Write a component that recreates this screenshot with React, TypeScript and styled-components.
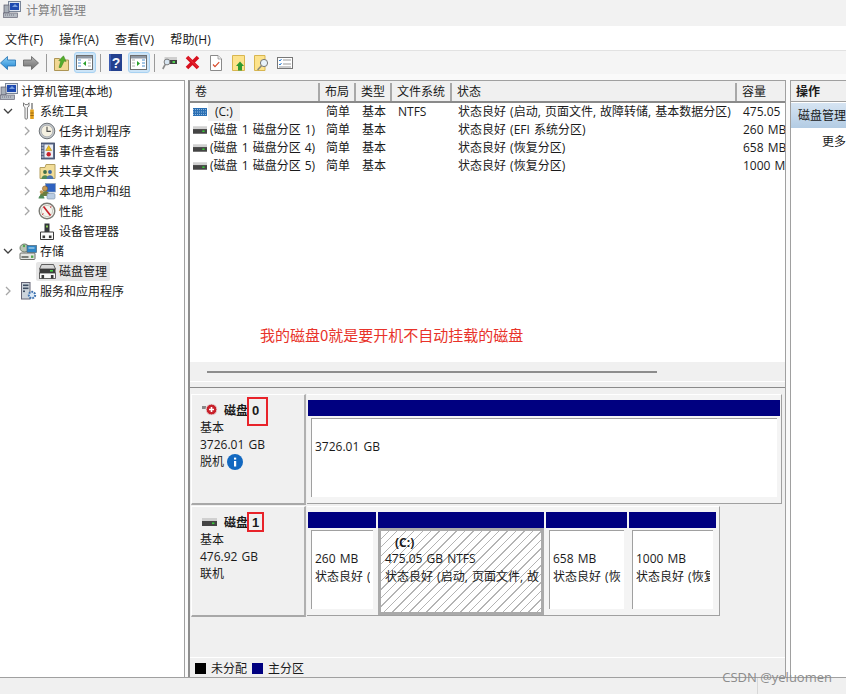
import React from "react";
import styled, { createGlobalStyle } from "styled-components";

const Global = createGlobalStyle`
  html, body { margin: 0; padding: 0; height: 100%; background: #fff; }
  body { font-family: "Open Sans", "Noto Sans CJK SC", sans-serif; font-size: 12px; color: #1a1a1a; overflow: hidden; word-spacing: 1px; }
  #root { width: 846px; height: 694px; }
`;

const Win = styled.div`
  position: relative; width: 846px; height: 694px; display: flex; flex-direction: column; overflow: hidden; background: #fff;
`;
const TitleBar = styled.div`
  height: 26px; background: #f2f2f2; display: flex; align-items: center; gap: 5px; padding: 0 0 7px 3px; box-sizing: border-box; color: #808080; font-size: 12px;
`;
const MenuBar = styled.div`
  height: 25px; box-sizing: border-box; background: #fff; display: flex; align-items: center; gap: 16px; padding-left: 5px; border-bottom: 1px solid #e2e2e2; padding-top: 1px; letter-spacing: 0.2px;
`;
const Toolbar = styled.div`
  height: 23px; background: #f5f5f5; display: flex; align-items: center; margin-left: -4px;
`;
const ToolSlot = styled.div`
  width: 23px; height: 23px; display: flex; align-items: center; justify-content: center;
`;
const ToolToggle = styled.div`
  width: 22px; height: 21px; display: flex; align-items: center; justify-content: center; box-sizing: border-box; background: #cce4f7; border: 1px solid #a8d2f2; border-radius: 3px;
`;
const ToolSep = styled.div`
  width: 8px; height: 18px; display: flex; justify-content: center;
  &::before { content: ""; width: 1px; background: #9a9a9a; }
`;
const Body = styled.div`
  flex: 1; display: flex; background: #fafafa; padding-top: 6px; min-height: 0;
`;
const TreePane = styled.div`
  width: 185px; box-sizing: border-box; background: #fff; border-top: 1px solid #a0a0a0; border-right: 1px solid #a0a0a0; margin-right: 3px;
`;
const TreeRow = styled.div<{ $depth: number }>`
  height: 20px; display: flex; align-items: center; padding-left: ${p => p.$depth}px;
`;
const Arrow = styled.span`
  width: 14px; height: 14px; margin-right: 4px; display: flex; align-items: center; justify-content: center; flex: none;
`;
const TreeLabel = styled.span<{ $selected?: boolean }>`
  display: flex; align-items: center; height: 19px; border-radius: 2px;
  margin-left: ${p => (p.$selected ? "-2px" : "0")};
  padding: ${p => (p.$selected ? "0 3px 0 2px" : "0")};
  background: ${p => (p.$selected ? "#e6e6e6" : "transparent")};
`;
const TreeIcon = styled.span`
  width: 18px; height: 18px; flex: none; display: flex; align-items: center; justify-content: center; margin-right: 3px;
`;
const MainPane = styled.div`
  width: 598px; box-sizing: border-box; border-left: 2px solid #8e8e8e; border-top: 1px solid #a0a0a0; border-right: 1px solid #a0a0a0; display: flex; flex-direction: column; background: #fff; margin-right: 4px;
`;
const ListArea = styled.div`
  height: 281px; background: #fff; overflow: hidden;
`;
const HeadRow = styled.div`
  height: 22px; display: flex; box-sizing: border-box; background: #f0f0f0; border-bottom: 2px solid #8a8a8a; padding-top: 2px;
`;
const HeadCell = styled.div<{ $w: number }>`
  width: ${p => p.$w}px; flex: none; box-sizing: border-box; padding-left: 5px; border-right: 2px solid #a8a8a8; line-height: 18px; overflow: hidden; white-space: nowrap;
  &:last-child { border-right: none; }
`;
const DataRow = styled.div`
  height: 18px; display: flex; align-items: center; white-space: nowrap;
`;
const DataCell = styled.div<{ $w: number }>`
  width: ${p => p.$w}px; flex: none; box-sizing: border-box; padding-left: 6px; overflow: hidden; display: flex; align-items: center; line-height: 18px;
`;
const VolCell = styled(DataCell)`
  padding-left: 3px; gap: 3px;
`;
const VolC = styled.span`
  background: #f0f0f0; padding: 0 7px; margin-left: -2px;
`;
const HScroll = styled.div`
  height: 20px; box-sizing: border-box; background: #f0f0f0; border-bottom: 1px solid #fff; display: flex; align-items: center; padding-left: 17px;
  &::before { content: ""; width: 450px; height: 2px; background: #8c8c8c; }
`;
const Splitter = styled.div`
  height: 5px; background: #f0f0f0; border-bottom: 1px solid #8a8a8a;
`;
const Graph = styled.div`
  flex: 1; background: #f0f0f0; display: flex; flex-direction: column; padding-top: 6px; min-height: 0;
`;
const DiskRow = styled.div`
  display: flex; height: 111px; margin-bottom: 1px;
`;
const DiskLabel = styled.div`
  width: 115px; box-sizing: border-box; margin-left: 1px; flex: none; background: #f0f0f0; border: 1px solid #fff; border-right: 2px solid #b0b0b0; border-bottom: 2px solid #a8a8a8; padding: 6px 0 0 8px; line-height: 17px;
`;
const DiskName = styled.div`
  display: flex; align-items: center; height: 18px; font-weight: 700;
`;
const DiskIconSlot = styled.span`
  width: 24px; flex: none; padding-left: 2px; box-sizing: border-box; display: flex; align-items: center;
`;
const DiskNumber = styled.span`
  font-family: "Liberation Sans", sans-serif; margin-left: 4px; font-size: 13px; position: relative;
`;
const RedBox = styled.span<{ $h: number; $w: number; $top: number }>`
  position: absolute; left: -5px; top: ${p => p.$top}px; width: ${p => p.$w}px; height: ${p => p.$h}px; border: 2px solid #e8232a; box-sizing: border-box;
`;
const Offline = styled.div`
  display: flex; align-items: center; gap: 3px;
`;
const Partitions = styled.div<{ $right: number }>`
  display: flex; box-sizing: border-box; margin-left: 1px; padding: 5px ${p => p.$right}px 0 1px; border-right: 1px solid #a0a0a0; border-bottom: 1px solid #a0a0a0; border-top: 1px solid #fff; background: #f4f4f4; height: 110px; gap: 2px;
`;
const Part = styled.div<{ $w: number }>`
  width: ${p => p.$w}px; flex: none; display: flex; flex-direction: column;
`;
const PartHead = styled.div`
  height: 16px; background: #000080; flex: none;
`;
const PartBody = styled.div`
  margin: 2px 3px 6px 3px; flex: 1; box-sizing: border-box; line-height: 18px; padding: 19px 3px 0 3px; background: #fff; min-width: 0;
  border-left: 1px solid #a0a0a0; border-top: 1px solid #a0a0a0;
`;
const SelectedPartBody = styled.div`
  flex: 1; box-sizing: border-box; line-height: 18px; padding: 4px 2px 0 4px; min-width: 0;
  background: repeating-linear-gradient(135deg, #fff 0 5px, #b4b4b4 5px 6px);
  border: 3px solid #aaa;
`;
const PartLines = styled.div`
  overflow: hidden; white-space: nowrap;
`;
const PartBold = styled.div`
  font-weight: 700; padding-left: 10px; line-height: 15px;
`;
const Legend = styled.div`
  margin-top: auto; height: 20px; box-sizing: border-box; border-top: 1px solid #fff; display: flex; align-items: center; padding: 1px 0 0 5px; background: #f0f0f0;
`;
const Swatch = styled.span<{ $c: string }>`
  width: 11px; height: 11px; background: ${p => p.$c}; margin-right: 5px; flex: none;
`;
const LegendText = styled.span`
  margin-right: 5px;
`;
const ActionPane = styled.div`
  flex: 1; background: #fff; border-left: 1px solid #a0a0a0; border-top: 1px solid #a0a0a0; overflow: hidden; white-space: nowrap;
`;
const ActionHead = styled.div`
  height: 21px; background: #f0f0f0; font-weight: 700; line-height: 21px; padding-left: 5px; border-bottom: 1px solid #a0a0a0; box-sizing: border-box;
`;
const ActionSel = styled.div`
  height: 25px; background: linear-gradient(#d6e4f2, #b3cce4); line-height: 25px; padding-left: 7px; margin-top: 1px;
`;
const ActionItem = styled.div`
  padding-left: 31px; line-height: 28px;
`;
const StatusBar = styled.div`
  height: 16px; background: #f0f0f0; border-top: 1px solid #a0a0a0; display: flex; justify-content: flex-end; flex: none;
  &::after { content: ""; width: 88px; border-left: 1px solid #d8d8d8; }
`;
const Note = styled.div`
  position: absolute; left: 260px; top: 325px; color: #e8332a; font-size: 15px; line-height: 20px; word-spacing: 0; font-family: "Noto Sans CJK SC", sans-serif;
`;
const Watermark = styled.div`
  position: absolute; right: 14px; top: 668px; color: #8c8c8c; font-size: 13px; line-height: 18px; word-spacing: 0; font-family: "Open Sans", sans-serif;
`;

const Chev = ({ open }: { open?: boolean }) => (
  <svg width="10" height="10" viewBox="0 0 10 10" fill="none" stroke={open ? "#404040" : "#a6a6a6"} strokeWidth="1.3">
    {open ? <path d="M1 3l4 4 4-4" /> : <path d="M3 1l4 4-4 4" />}
  </svg>
);
const Computer = () => (
  <svg width="18" height="17" viewBox="0 0 18 17">
    <rect x="5.5" y="0.5" width="12" height="10" fill="#dfe5ee" stroke="#7a8698" />
    <rect x="7" y="2" width="9" height="7" fill="#1d49b0" />
    <path d="M9 6l3-3 3 3" fill="#7aa0e0" />
    <rect x="1" y="4" width="5" height="8" fill="#a8afb8" stroke="#556" strokeWidth=".7" />
    <rect x="0.5" y="12" width="14" height="4.5" fill="#b4bac2" stroke="#667" strokeWidth=".7" />
    <path d="M2 14h10" stroke="#667" strokeWidth=".8" strokeDasharray="1 1" />
  </svg>
);
const Tools = () => (
  <svg width="13" height="18" viewBox="0 0 13 18">
    <path d="M1.5 .8v3.4L3 5.5V16a1.2 1.2 0 0 0 2.4 0V5.5L7 4.2V.8L5.6 2.6H3z" fill="#fafafa" stroke="#6c6c6c" strokeWidth=".9" />
    <path d="M10 1v6.5" stroke="#8a8a8a" strokeWidth="1.6" />
    <path d="M10 7.5v9.5" stroke="#e3a01a" strokeWidth="3.6" />
    <path d="M8.3 11h3.4M8.3 13.5h3.4" stroke="#8c5c10" strokeWidth=".8" />
  </svg>
);
const Clock = () => (
  <svg width="18" height="18" viewBox="0 0 18 18">
    <circle cx="9" cy="9" r="7.8" fill="#c4c8cc" stroke="#6f7478" />
    <circle cx="9" cy="9" r="5.8" fill="#f5f1e2" stroke="#9a9ea2" strokeWidth=".6" />
    <path d="M9 4.8V9.4H12.8" fill="none" stroke="#4c4c4c" strokeWidth="1.1" />
  </svg>
);
const EventLog = () => (
  <svg width="15" height="18" viewBox="0 0 15 18">
    <rect x="1.5" y="1" width="13" height="16" fill="#5d6c8c" stroke="#3a4560" strokeWidth=".8" />
    <path d="M1.5 3h2M1.5 6h2M1.5 9h2M1.5 12h2M1.5 15h2" stroke="#e0e4ec" />
    <rect x="4.5" y="2.5" width="8.5" height="13" fill="#eceef4" />
    <path d="M8.7 3.5l3 5h-6z" fill="#f0c020" stroke="#a07c10" strokeWidth=".5" />
    <circle cx="8.7" cy="12.3" r="2.2" fill="#c8202a" />
  </svg>
);
const SharedFolder = () => (
  <svg width="17" height="17" viewBox="0 0 17 17">
    <path d="M1 4.5h5l1-3h9v14H1z" fill="#f2dd98" stroke="#b4a060" />
    <circle cx="6" cy="9" r="1.9" fill="#3f6f48" />
    <circle cx="11" cy="9" r="1.9" fill="#39669e" />
    <path d="M2.5 16c0-5 7-5 7 0z" fill="#4f8a58" />
    <path d="M7.5 16c0-5 7-5 7 0z" fill="#4a74ae" />
  </svg>
);
const Users = () => (
  <svg width="18" height="17" viewBox="0 0 18 17">
    <rect x="7.5" y="0.5" width="10" height="8.5" fill="#2f62c0" stroke="#8aa0b8" strokeWidth=".7" />
    <circle cx="7" cy="5.5" r="2.6" fill="#c89a55" stroke="#6a4a20" strokeWidth=".5" />
    <path d="M2 13c0-6.5 10-6.5 10 0z" fill="#6b7d3e" />
    <circle cx="3.5" cy="9" r="1.8" fill="#c89a55" />
    <path d="M.5 15.5c0-4.5 6-4.5 6 0z" fill="#4f8a58" />
    <rect x="9" y="10.5" width="8" height="5.5" rx="1.2" fill="#b9cce2" stroke="#7a90a8" strokeWidth=".6" />
  </svg>
);
const Gauge = () => (
  <svg width="18" height="18" viewBox="0 0 18 18">
    <circle cx="9" cy="9" r="7.8" fill="#f6f5ef" stroke="#7a7a74" strokeWidth="1.4" />
    <circle cx="9" cy="9" r="5.6" fill="none" stroke="#b8b8ae" strokeWidth=".7" />
    <path d="M5.5 4.5L12.5 13.5" stroke="#c8202a" strokeWidth="1.7" />
    <path d="M12 5.5L13.4 4.4M4 12.5l1.5-.8" stroke="#c8202a" strokeWidth="1" />
  </svg>
);
const DeviceMgr = () => (
  <svg width="14" height="17" viewBox="0 0 14 17">
    <rect x="4.5" y="0.5" width="5" height="8.5" fill="#33373a" />
    <rect x="6" y="2.5" width="2" height="2" fill="#8ecb5a" />
    <path d="M.5 9h13v7.5H.5z" fill="#fafafa" stroke="#3a3a3a" />
    <rect x="2.5" y="12.5" width="2.6" height="2.6" fill="#3a3a3a" />
    <rect x="8.9" y="12.5" width="2.6" height="2.6" fill="#3a3a3a" />
  </svg>
);
const Storage = () => (
  <svg width="18" height="17" viewBox="0 0 18 17">
    <ellipse cx="5.5" cy="5" rx="4.5" ry="4" fill="#b9c4b4" stroke="#6f7a6a" />
    <circle cx="5" cy="3" r="1.2" fill="#4ea84e" />
    <rect x="8" y="2.5" width="9.5" height="7" fill="#2c86c8" stroke="#4a6478" strokeWidth=".7" />
    <path d="M9.5 5h6" stroke="#cfe6f6" strokeWidth="1" />
    <rect x="1" y="10" width="15" height="6.5" rx="1" fill="#e4e6e2" stroke="#6a6e68" />
    <rect x="2.5" y="13" width="7" height="2" fill="#7a7e78" />
    <rect x="12" y="12.5" width="2.4" height="2.4" fill="#54a84e" />
  </svg>
);
const Disk = ({ w = 15 }: { w?: number }) => (
  <svg width={w} height={Math.round(w * 0.55)} viewBox="0 0 15 8">
    <rect x="0" y="0" width="15" height="3" fill="#d0d0d0" />
    <rect x="0" y="3" width="15" height="5" fill="#444" />
    <rect x="10" y="4.5" width="2.4" height="1.6" fill="#35d035" />
  </svg>
);
const DiskBig = () => (
  <svg width="17" height="15" viewBox="0 0 17 15">
    <path d="M2.5 .5h12L16.5 5H.5z" fill="#d8d8d8" stroke="#3c3c3c" strokeWidth=".8" />
    <rect x="0.5" y="5" width="16" height="4" fill="#3a3a3a" />
    <rect x="11" y="6" width="3" height="1.6" fill="#43d043" />
    <rect x="0.5" y="9" width="16" height="5.5" fill="#f8f8f8" stroke="#3c3c3c" strokeWidth=".8" />
    <rect x="2.5" y="11" width="2.6" height="3.5" fill="#3a3a3a" />
    <rect x="11.9" y="11" width="2.6" height="3.5" fill="#3a3a3a" />
  </svg>
);
const VolumeStriped = () => (
  <svg width="14" height="8" viewBox="0 0 14 8">
    <rect width="14" height="8" fill="#2a6fb4" />
    <path d="M0 1.5h14M0 4h14M0 6.5h14" stroke="#c4def4" strokeWidth=".7" strokeDasharray="1 1" />
  </svg>
);
const Services = () => (
  <svg width="17" height="18" viewBox="0 0 17 18">
    <rect x="1.5" y="0.5" width="8.5" height="16.5" fill="#ccd4dc" stroke="#667" />
    <rect x="3" y="2.5" width="5.5" height="1.6" fill="#3d4d62" />
    <rect x="3" y="5.5" width="5.5" height="1.6" fill="#3d4d62" />
    <rect x="3" y="8.5" width="2" height="1.6" fill="#3d4d62" />
    <circle cx="12" cy="13" r="3.2" fill="#dbe9f6" stroke="#3f72b0" strokeWidth="2" strokeDasharray="1.8 1" />
  </svg>
);
const BackArrow = () => (
  <svg width="16" height="16" viewBox="0 0 16 16">
    <defs>
      <linearGradient id="backFill" x1="0" y1="0" x2="0" y2="1">
        <stop offset="0" stopColor="#8ed2f8" />
        <stop offset="1" stopColor="#1f83d0" />
      </linearGradient>
    </defs>
    <path d="M0.5 8L7.5 1.5V5H15.5V11H7.5V14.5Z" fill="url(#backFill)" stroke="#2270b0" strokeWidth=".8" />
  </svg>
);
const FwdArrow = () => (
  <svg width="16" height="16" viewBox="0 0 16 16">
    <defs>
      <linearGradient id="fwdFill" x1="0" y1="0" x2="0" y2="1">
        <stop offset="0" stopColor="#b4b4b4" />
        <stop offset="1" stopColor="#6e6e6e" />
      </linearGradient>
    </defs>
    <path d="M15.5 8L8.5 1.5V5H0.5V11H8.5V14.5Z" fill="url(#fwdFill)" stroke="#626262" strokeWidth=".8" />
  </svg>
);
const UpFolder = () => (
  <svg width="15" height="16" viewBox="0 0 15 16">
    <path d="M.5 3.5h5l1 1.5h8v10.5H.5z" fill="#f2d893" stroke="#ad9554" />
    <path d="M5 12.5L6.8 6 4.8 5.6 9.5.8l2.6 5.6-2-.3L7 12.5z" fill="#55ad2c" stroke="#38801c" strokeWidth=".5" />
  </svg>
);
const PanelIcon = ({ right }: { right?: boolean }) => (
  <svg width="17" height="15" viewBox="0 0 17 15">
    <rect x=".5" y=".5" width="16" height="14" fill="#fff" stroke="#6e6e6e" />
    <rect x="1" y="1" width="15" height="2.5" fill="#8e98a4" />
    {right
      ? <path d="M7 6l3 2.5-3 2.5z" fill="#2ca02c" />
      : <path d="M10 6l-3 2.5 3 2.5z" fill="#2ca02c" />}
    <path d={right ? "M12 5h3M12 8h3M12 11h3" : "M2 5h3M2 8h3M2 11h3"} stroke="#4a8fd0" />
    <path d={right ? "M2 5h3M2 8h3M2 11h3" : "M12 5h3M12 8h3M12 11h3"} stroke="#b0b0b0" />
  </svg>
);
const Help = () => (
  <svg width="13" height="17" viewBox="0 0 13 17">
    <rect width="13" height="17" fill="#23408e" />
    <rect x="0" y="0" width="2" height="17" fill="#3a5ab0" />
    <text x="7" y="14" textAnchor="middle" fontSize="14" fontWeight="700" fill="#f2f5fc" fontFamily="Liberation Sans">?</text>
  </svg>
);
const Connect = () => (
  <svg width="15" height="15" viewBox="0 0 15 15">
    <rect x="2.5" y="2" width="12.5" height="3" fill="#cfcfcf" />
    <rect x="2.5" y="5" width="12.5" height="4" fill="#3f3f3f" />
    <rect x="10.5" y="6" width="2.5" height="2" fill="#4fd04f" />
    <path d="M3.2 9.5L.8 14" stroke="#8a8a8a" strokeWidth="1.6" />
    <circle cx="5" cy="7" r="2.9" fill="#d8e6f2" stroke="#808080" />
  </svg>
);
const RedX = () => (
  <svg width="15" height="15" viewBox="0 0 15 15">
    <path d="M2 2l11 11M13 2L2 13" stroke="#d8101e" strokeWidth="3.6" />
    <path d="M3 2.5l9.5 9.5" stroke="#ec3a40" strokeWidth=".9" />
  </svg>
);
const CheckDoc = () => (
  <svg width="12" height="16" viewBox="0 0 12 16">
    <path d="M.5.5h7.5l3.5 3.5v11.5H.5z" fill="#fff" stroke="#8a8a8a" />
    <path d="M8 .5V4h3.5" fill="#eee" stroke="#8a8a8a" strokeWidth=".7" />
    <path d="M3 9.5l2 2.2L9.2 7.2" fill="none" stroke="#d84a2a" strokeWidth="1.2" />
  </svg>
);
const FolderUp = () => (
  <svg width="13" height="16" viewBox="0 0 13 16">
    <path d="M.5.5h12v15H.5z" fill="#fde38c" stroke="#d8b650" />
    <path d="M8 6.5l4 4.5H10v4.5H6V11H4z" fill="#2f9a2f" />
  </svg>
);
const FolderSearch = () => (
  <svg width="15" height="16" viewBox="0 0 15 16">
    <path d="M.5.5h10.5v15H.5z" fill="#fde38c" stroke="#d8b650" />
    <circle cx="10" cy="8" r="3.6" fill="#e8f2fa" stroke="#777" />
    <path d="M7.4 10.8L3.6 15" stroke="#8a8a7a" strokeWidth="1.6" />
  </svg>
);
const ListIcon = () => (
  <svg width="16" height="12" viewBox="0 0 16 12">
    <rect x=".5" y=".5" width="15" height="11" fill="#fff" stroke="#777" />
    <path d="M2 3l1 1 1.5-2M2 7l1 1 1.5-2" fill="none" stroke="#2f7fd0" />
    <path d="M6 3h8M6 7h8M2 10h12" stroke="#999" />
  </svg>
);
const OfflineBadge = () => (
  <svg width="18" height="14" viewBox="0 0 18 14">
    <rect x="0" y="3" width="4" height="3" fill="#888" />
    <circle cx="9.5" cy="6.5" r="5.5" fill="#c8202a" stroke="#e8e8e8" />
    <path d="M9.5 4v5M7 6.5h5" stroke="#fff" strokeWidth="1.6" />
  </svg>
);
const InfoIcon = () => (
  <svg width="16" height="16" viewBox="0 0 16 16">
    <circle cx="8" cy="8" r="8" fill="#1268c0" />
    <rect x="7" y="7" width="2.2" height="5.5" fill="#fff" />
    <rect x="7" y="3.6" width="2.2" height="2" fill="#fff" />
  </svg>
);

const treeRows: { d: number; arrow?: "open" | "closed"; icon: React.ReactNode; text: string; sel?: boolean }[] = [
  { d: 0, icon: <Computer />, text: "计算机管理(本地)" },
  { d: 1, arrow: "open", icon: <Tools />, text: "系统工具" },
  { d: 20, arrow: "closed", icon: <Clock />, text: "任务计划程序" },
  { d: 20, arrow: "closed", icon: <EventLog />, text: "事件查看器" },
  { d: 20, arrow: "closed", icon: <SharedFolder />, text: "共享文件夹" },
  { d: 20, arrow: "closed", icon: <Users />, text: "本地用户和组" },
  { d: 20, arrow: "closed", icon: <Gauge />, text: "性能" },
  { d: 38, icon: <DeviceMgr />, text: "设备管理器" },
  { d: 1, arrow: "open", icon: <Storage />, text: "存储" },
  { d: 38, icon: <DiskBig />, text: "磁盘管理", sel: true },
  { d: 1, arrow: "closed", icon: <Services />, text: "服务和应用程序" },
];

const cols = [130, 36, 36, 60, 285, 49];
const heads = ["卷", "布局", "类型", "文件系统", "状态", "容量"];
const vols = [
  { name: "(C:)", fs: "NTFS", state: "状态良好 (启动, 页面文件, 故障转储, 基本数据分区)", size: "475.05" },
  { name: "(磁盘 1 磁盘分区 1)", fs: "", state: "状态良好 (EFI 系统分区)", size: "260 MB" },
  { name: "(磁盘 1 磁盘分区 4)", fs: "", state: "状态良好 (恢复分区)", size: "658 MB" },
  { name: "(磁盘 1 磁盘分区 5)", fs: "", state: "状态良好 (恢复分区)", size: "1000 MB" },
];

export default function App() {
  return (
    <Win>
      <Global />
      <TitleBar><Computer /><span>计算机管理</span></TitleBar>
      <MenuBar>
        <span>文件(F)</span><span>操作(A)</span><span>查看(V)</span><span>帮助(H)</span>
      </MenuBar>
      <Toolbar>
        <ToolSlot><BackArrow /></ToolSlot>
        <ToolSlot><FwdArrow /></ToolSlot>
        <ToolSep />
        <ToolSlot><UpFolder /></ToolSlot>
        <ToolSlot><ToolToggle><PanelIcon /></ToolToggle></ToolSlot>
        <ToolSep />
        <ToolSlot><Help /></ToolSlot>
        <ToolSlot><ToolToggle><PanelIcon right /></ToolToggle></ToolSlot>
        <ToolSep />
        <ToolSlot><Connect /></ToolSlot>
        <ToolSlot><RedX /></ToolSlot>
        <ToolSlot><CheckDoc /></ToolSlot>
        <ToolSlot><FolderUp /></ToolSlot>
        <ToolSlot><FolderSearch /></ToolSlot>
        <ToolSlot><ListIcon /></ToolSlot>
      </Toolbar>
      <Body>
        <TreePane>
          {treeRows.map(r => (
            <TreeRow key={r.text} $depth={r.d}>
              {r.arrow && <Arrow><Chev open={r.arrow === "open"} /></Arrow>}
              <TreeLabel $selected={r.sel}>
                <TreeIcon>{r.icon}</TreeIcon>
                <span>{r.text}</span>
              </TreeLabel>
            </TreeRow>
          ))}
        </TreePane>
        <MainPane>
          <ListArea>
            <HeadRow>
              {heads.map((h, i) => <HeadCell key={h} $w={cols[i]}>{h}</HeadCell>)}
            </HeadRow>
            {vols.map((v, idx) => (
              <DataRow key={v.name}>
                <VolCell $w={cols[0]}>
                  {idx === 0 ? <VolumeStriped /> : <Disk w={14} />}
                  {idx === 0 ? <VolC>{v.name}</VolC> : <span>{v.name}</span>}
                </VolCell>
                <DataCell $w={cols[1]}>简单</DataCell>
                <DataCell $w={cols[2]}>基本</DataCell>
                <DataCell $w={cols[3]}>{v.fs}</DataCell>
                <DataCell $w={cols[4]}>{v.state}</DataCell>
                <DataCell $w={cols[5]}>{v.size}</DataCell>
              </DataRow>
            ))}
          </ListArea>
          <HScroll />
          <Splitter />
          <Graph>
            <DiskRow>
              <DiskLabel>
                <DiskName>
                  <DiskIconSlot><OfflineBadge /></DiskIconSlot>
                  <span>磁盘</span>
                  <DiskNumber>0<RedBox $w={21} $h={29} $top={-5} /></DiskNumber>
                </DiskName>
                <div>基本</div>
                <div>3726.01 GB</div>
                <Offline>脱机 <InfoIcon /></Offline>
              </DiskLabel>
              <Partitions $right={1}>
                <Part $w={472}>
                  <PartHead />
                  <PartBody><PartLines>3726.01 GB</PartLines></PartBody>
                </Part>
              </Partitions>
            </DiskRow>
            <DiskRow>
              <DiskLabel>
                <DiskName>
                  <DiskIconSlot><Disk w={15} /></DiskIconSlot>
                  <span>磁盘</span>
                  <DiskNumber>1<RedBox $w={17} $h={20} $top={-2} /></DiskNumber>
                </DiskName>
                <div>基本</div>
                <div>476.92 GB</div>
                <div>联机</div>
              </DiskLabel>
              <Partitions $right={3}>
                <Part $w={68}>
                  <PartHead />
                  <PartBody><PartLines><div>260 MB</div><div>状态良好 (</div></PartLines></PartBody>
                </Part>
                <Part $w={166}>
                  <PartHead />
                  <SelectedPartBody>
                    <PartLines>
                      <PartBold>(C:)</PartBold>
                      <div>475.05 GB NTFS</div>
                      <div>状态良好 (启动, 页面文件, 故</div>
                    </PartLines>
                  </SelectedPartBody>
                </Part>
                <Part $w={81}>
                  <PartHead />
                  <PartBody><PartLines><div>658 MB</div><div>状态良好 (恢</div></PartLines></PartBody>
                </Part>
                <Part $w={87}>
                  <PartHead />
                  <PartBody><PartLines><div>1000 MB</div><div>状态良好 (恢复</div></PartLines></PartBody>
                </Part>
              </Partitions>
            </DiskRow>
            <Legend>
              <Swatch $c="#000" /><LegendText>未分配</LegendText>
              <Swatch $c="#000080" /><LegendText>主分区</LegendText>
            </Legend>
          </Graph>
        </MainPane>
        <ActionPane>
          <ActionHead>操作</ActionHead>
          <ActionSel>磁盘管理</ActionSel>
          <ActionItem>更多</ActionItem>
        </ActionPane>
      </Body>
      <StatusBar />
      <Note>我的磁盘0就是要开机不自动挂载的磁盘</Note>
      <Watermark>CSDN @yeluomen</Watermark>
    </Win>
  );
}
